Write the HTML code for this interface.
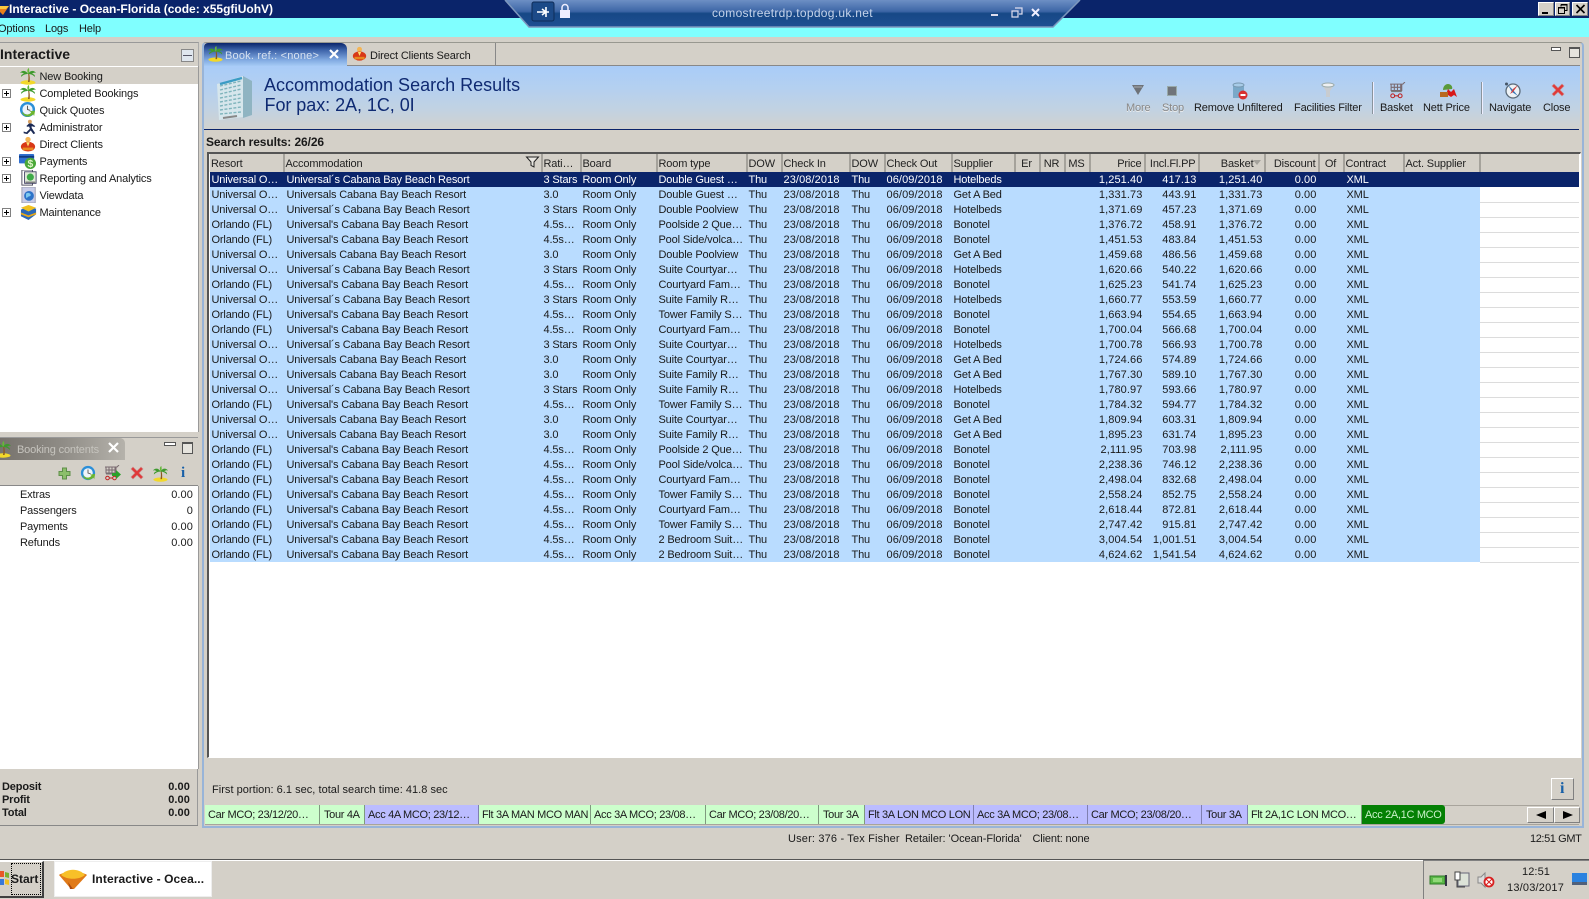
<!DOCTYPE html>
<html><head><meta charset="utf-8"><title>Interactive</title>
<style>
html,body{margin:0;padding:0;width:1589px;height:899px;overflow:hidden;background:#d4d0c8}
body{position:relative;font:11px/14px "Liberation Sans",sans-serif;color:#1a1a1a;letter-spacing:-.15px}
.a{position:absolute;white-space:nowrap}
svg{position:absolute;overflow:visible}
.t{position:absolute;white-space:nowrap;height:14px;line-height:14px}
.b{font-weight:bold}
.exp{position:absolute;left:2px;width:7px;height:7px;border:1px solid #808080;background:#fff}
.exp:before{content:"";position:absolute;left:1px;top:3px;width:5px;height:1px;background:#000}
.exp:after{content:"";position:absolute;left:3px;top:1px;width:1px;height:5px;background:#000}
table{border-collapse:collapse;table-layout:fixed;width:1369px;position:absolute;left:209px;top:154px}
th{height:18px;padding:1px 2px 0 1px;box-sizing:border-box;background:#d4d0c8;font-weight:normal;text-align:left;white-space:nowrap;overflow:hidden;border-right:2px solid #a5a29b;border-left:1px solid #efeee9;color:#222}
tr.h th:last-child{border-right:0}
td{height:15px;padding:1px 2px 0 2px;box-sizing:border-box;white-space:nowrap;overflow:hidden;background:#b9dcff;line-height:14px}
td:nth-child(7),td:nth-child(9),td:nth-child(14),td:nth-child(15),td:nth-child(16),td:nth-child(17){letter-spacing:.1px}
td:nth-child(n+14):nth-child(-n+17){text-align:right;padding-right:2px}
td:nth-child(14){padding-right:4px}
td:nth-child(16){padding-right:3px}
td:nth-child(15){padding-right:1px}
td:nth-child(2),td:nth-child(19){padding-left:3px}
td:last-child{background:#fff;border-bottom:1px solid #dcdcdc}
tr.s td{background:#0a246a;color:#fff;border-bottom:0}
.tg{position:absolute;top:805px;height:19px;line-height:20px;padding-left:4px;box-sizing:border-box;border-right:1px solid #7f9a7f;white-space:nowrap;overflow:hidden;background:#ccffcc;letter-spacing:-.32px}
.bl{background:#bbbcff;border-right-color:#8080b0}
.btn{position:absolute;background:#d4d0c8;border:1px solid;border-color:#fff #808080 #808080 #fff;box-sizing:border-box}
</style></head><body>
<svg width="0" height="0" style="position:absolute">
<defs>
<symbol id="palm" viewBox="0 0 18 18"><ellipse cx="9" cy="15.5" rx="7.5" ry="2.2" fill="#f2d82a"/><path d="M9 6c.6 3 .6 6 0 9h1.6c.4-3 .2-6-.6-9z" fill="#8a5a20"/><path d="M9 7C7 3 3 3 1 6c2-1 3 0 4 1-2 0-3 1-3 3 2-2 4-3 7-3zM9 7c2-4 6-4 8-1-2-1-3 0-4 1 2 0 3 1 3 3-2-2-4-3-7-3z" fill="#3e9a2e"/><path d="M9 7C8 4 8 2 10 1c0 2 1 4-1 6z" fill="#66b83a"/></symbol>
<symbol id="clock" viewBox="0 0 18 18"><circle cx="9" cy="9" r="8" fill="#2c8fd8"/><circle cx="9" cy="9" r="5.4" fill="#eef4fa"/><path d="M9 5v4l3 1" stroke="#555" fill="none"/><path d="M3 12c2 5 8 6 12 2l1 2 1-6-6 1 2 1c-2 3-7 3-9 0z" fill="#6cb52e"/></symbol>
<symbol id="man" viewBox="0 0 18 18"><circle cx="10" cy="3" r="2.2" fill="#d8a060"/><path d="M9 5l-3 3 2 1 1-1 1 3-4 4-3-1 0 2 4 1 4-4 3 4 2-1-4-6V8l3 1 1-1-4-3z" fill="#1b2a55"/></symbol>
<symbol id="client" viewBox="0 0 18 18"><circle cx="9" cy="4" r="3" fill="#f4b454"/><ellipse cx="9" cy="12" rx="8" ry="5.500" fill="#d83818"/><path d="M3 13h12v3H3z" fill="#e88a20"/><path d="M7 7l2 5 2-5z" fill="#ffe070"/></symbol>
<symbol id="pay" viewBox="0 0 18 18"><rect x="0" y="1" width="16" height="10" rx="1" fill="#2f6fd0"/><rect x="0" y="3" width="16" height="2" fill="#113a80"/><circle cx="12" cy="11" r="6" fill="#4aa838"/><text x="12" y="15" font-size="11" font-weight="bold" text-anchor="middle" fill="#dff5c8" font-family="Liberation Sans">$</text></symbol>
<symbol id="rep" viewBox="0 0 18 18"><rect x="1" y="0" width="12" height="17" fill="#fff" stroke="#445"/><rect x="4" y="2" width="13" height="13" fill="#dfe8d8" stroke="#446"/><circle cx="10.500" cy="8" r="4" fill="#3eaa48"/><rect x="5" y="13" width="11" height="1.500" fill="#777"/></symbol>
<symbol id="view" viewBox="0 0 18 18"><rect x="1" y="0" width="15" height="18" fill="#c8cce8" stroke="#99a"/><circle cx="9" cy="10" r="5.500" fill="#2c72c8"/><path d="M6 7c2-1 5 0 5 2s-3 1-4 3-2-3-1-5z" fill="#7bc8f0"/></symbol>
<symbol id="maint" viewBox="0 0 18 18"><path d="M1 6l8-4 8 3v6l-8 6-8-4z" fill="#2a68b8"/><path d="M1 4l8-3 8 3-8 4z" fill="#f0c020"/><path d="M1 9l8 3 8-3v2l-8 3-8-3z" fill="#e8a818"/></symbol>
<symbol id="xred" viewBox="0 0 14 14"><path d="M1 3l2-2 4 4 4-4 2 2-4 4 4 4-2 2-4-4-4 4-2-2 4-4z" fill="#e03838" stroke="#c88" stroke-width=".6"/></symbol>
<symbol id="cart" viewBox="0 0 16 16"><path d="M1 2h12l2-2M2 2v6h10V2M5 2v6M8 2v6M11 2v6M2 5h10" stroke="#7a6a70" fill="none"/><path d="M2 9h10" stroke="#777"/><circle cx="3.500" cy="13" r="1.800" fill="none" stroke="#c02020"/><circle cx="10.500" cy="13" r="1.800" fill="none" stroke="#c02020"/><path d="M5 13h4" stroke="#c02020"/></symbol>
</defs></svg>

<!-- title bar -->
<div class="a" style="left:0;top:0;width:1589px;height:18px;background:#0a246a"></div>
<svg style="left:0;top:2px" width="9" height="14"><path d="M0 4h9L3 13 0 10z" fill="#e8801c"/><path d="M0 4h9L6 7H0z" fill="#f8c840"/></svg>
<div class="t b" style="left:9px;top:2px;color:#fff;font-size:12px;letter-spacing:0">Interactive - Ocean-Florida (code: x55gfiUohV)</div>
<div class="btn" style="left:1538px;top:2px;width:16px;height:14px"><div style="position:absolute;left:3px;top:9px;width:6px;height:2px;background:#000"></div></div>
<div class="btn" style="left:1555px;top:2px;width:15px;height:14px"><svg style="left:2px;top:1px" width="10" height="10"><path d="M3 .5h6v6H7M3 .5v2M.5 3.500h6v6h-6z" fill="none" stroke="#000"/><path d="M3 1h6M1 4h5" stroke="#000"/></svg></div>
<div class="btn" style="left:1572px;top:2px;width:16px;height:14px"><svg style="left:3px;top:2px" width="9" height="8"><path d="M.5 0l8 8M8.500 0l-8 8" stroke="#000" stroke-width="1.600"/></svg></div>

<!-- menu bar -->
<div class="a" style="left:0;top:18px;width:1589px;height:19px;background:#80ffff"></div>
<div class="t" style="left:-2px;top:22px">Options</div>
<div class="t" style="left:45px;top:22px">Logs</div>
<div class="t" style="left:79px;top:22px">Help</div>

<!-- RDP bar -->
<svg style="left:505px;top:0" width="575" height="29"><defs><linearGradient id="rd" x1="0" y1="0" x2="0" y2="1"><stop offset="0" stop-color="#6d8fc4"/><stop offset=".42" stop-color="#3d66a6"/><stop offset=".5" stop-color="#164886"/><stop offset="1" stop-color="#1f4f92"/></linearGradient></defs><path d="M0 0H575L548 27H24z" fill="url(#rd)"/><path d="M0 0L24 27H548L575 0" fill="none" stroke="#7d97bd" stroke-width="1.500"/><rect x="27" y="2" width="22" height="19" rx="2" fill="#1c4a88" stroke="#0e2c58"/><path d="M32 12h12M41 7v10M41 12l-4-3M41 12l-4 3" stroke="#fff" stroke-width="1.600" fill="none"/><rect x="55" y="10" width="10" height="8" fill="#eef"/><path d="M57 10V7.500a3 3 0 0 1 6 0V10" fill="none" stroke="#eef" stroke-width="1.500"/><rect x="486" y="14" width="7" height="2" fill="#dde"/><path d="M510 8h7v6h-3M507 11h6v6h-6z" fill="none" stroke="#dde" stroke-width="1.200"/><path d="M527 9l7 7M534 9l-7 7" stroke="#eef" stroke-width="2"/></svg>
<div class="t" style="left:712px;top:6px;color:#c4d3ea;font-size:12px;letter-spacing:.3px">comostreetrdp.topdog.uk.net</div>

<!-- left panel -->
<div class="a" style="left:0;top:42px;width:198px;height:23px;border-top:1px solid #999;border-bottom:1px solid #888;border-right:1px solid #aaa;box-sizing:content-box"></div>
<div class="t b" style="left:0;top:47px;font-size:14px;letter-spacing:0">Interactive</div>
<div class="a" style="left:181px;top:49px;width:11px;height:11px;border:1px solid #888;background:#dfe6ee"><div style="position:absolute;left:1px;top:5px;width:9px;height:1px;background:#556"></div></div>
<div class="a" style="left:0;top:66px;width:198px;height:366px;background:#fff;border-right:1px solid #999"></div>
<div class="a" style="left:0;top:67px;width:198px;height:17px;background:#d4d0c8"></div>
<svg style="left:19px;top:67px" width="18" height="18"><use href="#palm"/></svg><div class="t" style="left:39.500px;top:70px">New Booking</div>
<div class="exp" style="top:89px"></div><svg style="left:19px;top:84px" width="18" height="18"><use href="#palm"/></svg><div class="t" style="left:39.500px;top:87px">Completed Bookings</div>
<svg style="left:19px;top:101px" width="17" height="17"><use href="#clock"/></svg><div class="t" style="left:39.500px;top:104px">Quick Quotes</div>
<div class="exp" style="top:123px"></div><svg style="left:21px;top:119px" width="16" height="16"><use href="#man"/></svg><div class="t" style="left:39.500px;top:121px">Administrator</div>
<svg style="left:20px;top:136px" width="16" height="16"><use href="#client"/></svg><div class="t" style="left:39.500px;top:138px">Direct Clients</div>
<div class="exp" style="top:157px"></div><svg style="left:19px;top:153px" width="17" height="17"><use href="#pay"/></svg><div class="t" style="left:39.500px;top:155px">Payments</div>
<div class="exp" style="top:174px"></div><svg style="left:21px;top:170px" width="16" height="16"><use href="#rep"/></svg><div class="t" style="left:39.500px;top:172px">Reporting and Analytics</div>
<svg style="left:21px;top:187px" width="16" height="16"><use href="#view"/></svg><div class="t" style="left:39.500px;top:189px">Viewdata</div>
<div class="exp" style="top:208px"></div><svg style="left:20px;top:204px" width="17" height="17"><use href="#maint"/></svg><div class="t" style="left:39.500px;top:206px">Maintenance</div>

<!-- Booking contents panel -->
<div class="a" style="left:0;top:437px;width:198px;height:22px;border-top:1px solid #999"></div>
<div class="a" style="left:0;top:438px;width:125px;height:22px;background:linear-gradient(90deg,#77736d 0%,#8f8c86 50%,#b5b2ab 100%);border-radius:0 5px 0 0"></div>
<svg style="left:-6px;top:440px" width="18" height="18"><use href="#palm"/></svg>
<div class="t" style="left:17px;top:443px;color:#c6c4be">Booking contents</div>
<svg style="left:108px;top:442px" width="11" height="11"><path d="M1 1l9 9M10 1l-9 9" stroke="#fff" stroke-width="2.200"/></svg>
<div class="a" style="left:164px;top:442px;width:10px;height:2px;border:1px solid #555;background:#fff"></div>
<div class="a" style="left:182px;top:442px;width:9px;height:9px;border:1px solid #555;border-top-width:2px;background:#e6e4de"></div>
<div class="a" style="left:0;top:460px;width:198px;height:25px;border-bottom:1px solid #888"></div>
<svg style="left:58px;top:467px" width="13" height="13"><path d="M4.500 1h4v3.500H12v4H8.500V12h-4V8.500H1v-4h3.500z" fill="#8cbf6a" stroke="#5f8f4a"/></svg>
<svg style="left:80px;top:465px" width="16" height="16"><use href="#clock"/></svg>
<svg style="left:104px;top:465px" width="16" height="16"><use href="#cart"/></svg><svg style="left:112px;top:470px" width="9" height="9"><path d="M0 3h4V0l5 4.500L4 9V6H0z" fill="#2ca02c"/></svg>
<svg style="left:130px;top:466px" width="14" height="14"><use href="#xred"/></svg>
<svg style="left:152px;top:465px" width="17" height="17"><use href="#palm"/></svg>
<div class="t b" style="left:181px;top:466px;font-size:15px;font-family:'Liberation Serif',serif;color:#1860a8">i</div>
<div class="a" style="left:0;top:486px;width:198px;height:283px;background:#fff;border-right:1px solid #999"></div>
<div class="t" style="left:20px;top:488px">Extras</div><div class="t" style="right:1396px;top:488px;letter-spacing:.1px">0.00</div>
<div class="t" style="left:20px;top:504px">Passengers</div><div class="t" style="right:1396px;top:504px;letter-spacing:.1px">0</div>
<div class="t" style="left:20px;top:520px">Payments</div><div class="t" style="right:1396px;top:520px;letter-spacing:.1px">0.00</div>
<div class="t" style="left:20px;top:536px">Refunds</div><div class="t" style="right:1396px;top:536px;letter-spacing:.1px">0.00</div>
<div class="t b" style="left:2px;top:780px">Deposit</div><div class="t b" style="right:1399px;top:780px;letter-spacing:.1px">0.00</div>
<div class="t b" style="left:2px;top:793px">Profit</div><div class="t b" style="right:1399px;top:793px;letter-spacing:.1px">0.00</div>
<div class="t b" style="left:2px;top:806px">Total</div><div class="t b" style="right:1399px;top:806px;letter-spacing:.1px">0.00</div>
<div class="a" style="left:0;top:825px;width:198px;height:1px;background:#888"></div>
<div class="a" style="left:197px;top:769px;width:1px;height:56px;background:#999"></div>

<!-- main panel -->
<div class="a" style="left:202px;top:42px;width:1378px;height:783px;border:1px solid #989890;border-radius:4px 4px 0 0;border-left:2px solid #98b4d8;border-bottom:2px solid #98b4d8;border-right:2px solid #98b4d8"></div>
<div class="a" style="left:204px;top:65px;width:1376px;height:1px;background:#888"></div>
<div class="a" style="left:204px;top:43px;width:143px;height:23px;background:linear-gradient(180deg,#0a246a 0,#3c62a8 30%,#82abe2 75%,#a6caf5 100%);border-radius:4px 6px 0 0"></div>
<svg style="left:207px;top:45px" width="17" height="17"><use href="#palm"/></svg>
<div class="t" style="left:225px;top:48.500px;color:#d6e1f0;letter-spacing:.2px">Book. ref.: &lt;none&gt;</div>
<svg style="left:329px;top:49px" width="10" height="10"><path d="M1 1l8 8M9 1l-8 8" stroke="#fff" stroke-width="2.200"/></svg>
<div class="a" style="left:347px;top:43px;width:148px;height:22px;border-right:1px solid #888"></div>
<svg style="left:352px;top:46px" width="15" height="15"><use href="#client"/></svg>
<div class="t" style="left:370px;top:48.500px;letter-spacing:-.13px">Direct Clients Search</div>
<div class="a" style="left:1551px;top:47px;width:8px;height:2px;border:1px solid #555;background:#fff"></div>
<div class="a" style="left:1569px;top:47px;width:9px;height:8px;border:1px solid #555;border-top-width:2px;background:#e6e4de"></div>

<!-- header band -->
<div class="a" style="left:204px;top:66px;width:1376px;height:63px;background:linear-gradient(180deg,#a9ccf8 0,#b4d0f0 35%,#c2d2e2 70%,#d1d2ce 100%)"></div>
<div class="a" style="left:204px;top:129px;width:1375px;height:1px;background:#0a246a"></div>
<svg style="left:217px;top:73px" width="37" height="48"><path d="M0 11L26 3v41L2 47z" fill="#d6e6ec"/><path d="M26 3l9 5v34l-9 3z" fill="#8fb4c2"/><g stroke="#7fb4bc" stroke-width="1.400" stroke-dasharray="3 1.500" fill="none"><path d="M3 13l21-5M3 17l21-5M3 21l21-5M3 25l21-4M3 29l21-4M3 33l21-4M3 37l21-3M3 41l21-2"/></g><path d="M3 11l22-6" stroke="#3a9cc4" stroke-width="2.400"/><path d="M6 45l14-2" stroke="#888" stroke-width="2"/></svg>
<div class="t" style="left:264px;top:76px;font-size:18px;line-height:18px;height:18px;color:#0f2a72;letter-spacing:0">Accommodation Search Results</div>
<div class="t" style="left:264.500px;top:96px;font-size:18px;line-height:18px;height:18px;color:#0f2a72;letter-spacing:-.05px">For pax: 2A, 1C, 0I</div>

<!-- toolbar -->
<svg style="left:1132px;top:84px" width="13" height="12"><path d="M0 1h12L6 11z" fill="#6e7278"/><path d="M2 3h8" stroke="#a8acb0"/></svg>
<div class="a" style="left:1167px;top:86px;width:8px;height:8px;background:#70747a;border:1px solid #9aa"></div>
<svg style="left:1232px;top:82px" width="16" height="18"><path d="M1 3h11v13H1z" fill="#7aa8c8"/><ellipse cx="6.500" cy="3" rx="5.500" ry="2" fill="#a8cce8" stroke="#7898b0"/><circle cx="11" cy="13" r="4.500" fill="#d83030"/><rect x="8.500" y="12" width="5" height="2" fill="#fff"/></svg>
<svg style="left:1321px;top:82px" width="14" height="16"><path d="M0 2h14L9 9v6H5V9z" fill="#c8ccd0"/><ellipse cx="7" cy="3" rx="6" ry="2" fill="#eef0f2" stroke="#9aa"/></svg>
<svg style="left:1389px;top:82px" width="17" height="17"><use href="#cart"/></svg>
<svg style="left:1440px;top:82px" width="17" height="17"><path d="M3 8c0-3 2-6 5-6s5 3 4 5z" fill="#5a9a3a"/><path d="M5 15l3-8 3 3 3-3 3 8-3-2-3 2-3-2z" fill="#d81818"/><rect x="0" y="10" width="8" height="5" fill="#b86820"/></svg>
<svg style="left:1504px;top:82px" width="18" height="18"><circle cx="9" cy="9" r="7" fill="#eef3f6" stroke="#5a6a78" stroke-width="1.300"/><path d="M4 3l5 5 5 6-6-4z" fill="#3878b8"/><path d="M14 3L9 10l-3 2 3-5z" fill="#d04040"/><circle cx="2.500" cy="2" r="1.500" fill="#456"/></svg>
<svg style="left:1551px;top:83px" width="14" height="14"><use href="#xred"/></svg>
<div class="t" style="left:1126px;top:100.500px;color:#888;text-shadow:0 1px 0 #eee">More</div>
<div class="t" style="left:1162px;top:100.500px;color:#888;text-shadow:0 1px 0 #eee">Stop</div>
<div class="t" style="left:1194px;top:100.500px">Remove Unfiltered</div>
<div class="t" style="left:1294px;top:100.500px">Facilities Filter</div>
<div class="a" style="left:1372px;top:82px;width:1px;height:32px;background:#8a949c;border-right:1px solid #eef"></div>
<div class="t" style="left:1380px;top:100.500px">Basket</div>
<div class="t" style="left:1423px;top:100.500px">Nett Price</div>
<div class="a" style="left:1481px;top:82px;width:1px;height:32px;background:#8a949c;border-right:1px solid #eef"></div>
<div class="t" style="left:1489px;top:100.500px">Navigate</div>
<div class="t" style="left:1543px;top:100.500px">Close</div>

<div class="t b" style="left:206px;top:135px;font-size:12px;letter-spacing:-.1px">Search results: 26/26</div>

<!-- table frame -->
<div class="a" style="left:207px;top:152px;width:1371px;height:603px;background:#fff;border:1px solid;border-color:#555 #fff #fff #555;border-top-width:2px;border-left-width:2px;box-sizing:content-box"></div>
<table>
<colgroup><col style="width:74px"><col style="width:258px"><col style="width:39px"><col style="width:76px"><col style="width:90px"><col style="width:35px"><col style="width:68px"><col style="width:35px"><col style="width:67px"><col style="width:63px"><col style="width:25px"><col style="width:25px"><col style="width:25px"><col style="width:55px"><col style="width:54px"><col style="width:66px"><col style="width:54px"><col style="width:25px"><col style="width:60px"><col style="width:76px"><col style="width:99px"></colgroup>
<tr class="h"><th>Resort</th><th>Accommodation</th><th>Rati…</th><th>Board</th><th>Room type</th><th>DOW</th><th>Check In</th><th>DOW</th><th>Check Out</th><th>Supplier</th><th style="text-align:center">Er</th><th style="text-align:center">NR</th><th style="text-align:center">MS</th><th style="text-align:right">Price</th><th style="text-align:right">Incl.Fl.PP</th><th style="text-align:right;padding-right:10px">Basket</th><th style="text-align:right">Discount</th><th style="text-align:center">Of</th><th>Contract</th><th>Act. Supplier</th><th></th></tr>
<tr class="s"><td>Universal O…</td><td>Universal´s Cabana Bay Beach Resort</td><td>3 Stars</td><td>Room Only</td><td>Double Guest …</td><td>Thu</td><td>23/08/2018</td><td>Thu</td><td>06/09/2018</td><td>Hotelbeds</td><td></td><td></td><td></td><td>1,251.40</td><td>417.13</td><td>1,251.40</td><td>0.00</td><td></td><td>XML</td><td></td><td></td></tr>
<tr><td>Universal O…</td><td>Universals Cabana Bay Beach Resort</td><td>3.0</td><td>Room Only</td><td>Double Guest …</td><td>Thu</td><td>23/08/2018</td><td>Thu</td><td>06/09/2018</td><td>Get A Bed</td><td></td><td></td><td></td><td>1,331.73</td><td>443.91</td><td>1,331.73</td><td>0.00</td><td></td><td>XML</td><td></td><td></td></tr>
<tr><td>Universal O…</td><td>Universal´s Cabana Bay Beach Resort</td><td>3 Stars</td><td>Room Only</td><td>Double Poolview</td><td>Thu</td><td>23/08/2018</td><td>Thu</td><td>06/09/2018</td><td>Hotelbeds</td><td></td><td></td><td></td><td>1,371.69</td><td>457.23</td><td>1,371.69</td><td>0.00</td><td></td><td>XML</td><td></td><td></td></tr>
<tr><td>Orlando (FL)</td><td>Universal's Cabana Bay Beach Resort</td><td>4.5s…</td><td>Room Only</td><td>Poolside 2 Que…</td><td>Thu</td><td>23/08/2018</td><td>Thu</td><td>06/09/2018</td><td>Bonotel</td><td></td><td></td><td></td><td>1,376.72</td><td>458.91</td><td>1,376.72</td><td>0.00</td><td></td><td>XML</td><td></td><td></td></tr>
<tr><td>Orlando (FL)</td><td>Universal's Cabana Bay Beach Resort</td><td>4.5s…</td><td>Room Only</td><td>Pool Side/volca…</td><td>Thu</td><td>23/08/2018</td><td>Thu</td><td>06/09/2018</td><td>Bonotel</td><td></td><td></td><td></td><td>1,451.53</td><td>483.84</td><td>1,451.53</td><td>0.00</td><td></td><td>XML</td><td></td><td></td></tr>
<tr><td>Universal O…</td><td>Universals Cabana Bay Beach Resort</td><td>3.0</td><td>Room Only</td><td>Double Poolview</td><td>Thu</td><td>23/08/2018</td><td>Thu</td><td>06/09/2018</td><td>Get A Bed</td><td></td><td></td><td></td><td>1,459.68</td><td>486.56</td><td>1,459.68</td><td>0.00</td><td></td><td>XML</td><td></td><td></td></tr>
<tr><td>Universal O…</td><td>Universal´s Cabana Bay Beach Resort</td><td>3 Stars</td><td>Room Only</td><td>Suite Courtyar…</td><td>Thu</td><td>23/08/2018</td><td>Thu</td><td>06/09/2018</td><td>Hotelbeds</td><td></td><td></td><td></td><td>1,620.66</td><td>540.22</td><td>1,620.66</td><td>0.00</td><td></td><td>XML</td><td></td><td></td></tr>
<tr><td>Orlando (FL)</td><td>Universal's Cabana Bay Beach Resort</td><td>4.5s…</td><td>Room Only</td><td>Courtyard Fam…</td><td>Thu</td><td>23/08/2018</td><td>Thu</td><td>06/09/2018</td><td>Bonotel</td><td></td><td></td><td></td><td>1,625.23</td><td>541.74</td><td>1,625.23</td><td>0.00</td><td></td><td>XML</td><td></td><td></td></tr>
<tr><td>Universal O…</td><td>Universal´s Cabana Bay Beach Resort</td><td>3 Stars</td><td>Room Only</td><td>Suite Family R…</td><td>Thu</td><td>23/08/2018</td><td>Thu</td><td>06/09/2018</td><td>Hotelbeds</td><td></td><td></td><td></td><td>1,660.77</td><td>553.59</td><td>1,660.77</td><td>0.00</td><td></td><td>XML</td><td></td><td></td></tr>
<tr><td>Orlando (FL)</td><td>Universal's Cabana Bay Beach Resort</td><td>4.5s…</td><td>Room Only</td><td>Tower Family S…</td><td>Thu</td><td>23/08/2018</td><td>Thu</td><td>06/09/2018</td><td>Bonotel</td><td></td><td></td><td></td><td>1,663.94</td><td>554.65</td><td>1,663.94</td><td>0.00</td><td></td><td>XML</td><td></td><td></td></tr>
<tr><td>Orlando (FL)</td><td>Universal's Cabana Bay Beach Resort</td><td>4.5s…</td><td>Room Only</td><td>Courtyard Fam…</td><td>Thu</td><td>23/08/2018</td><td>Thu</td><td>06/09/2018</td><td>Bonotel</td><td></td><td></td><td></td><td>1,700.04</td><td>566.68</td><td>1,700.04</td><td>0.00</td><td></td><td>XML</td><td></td><td></td></tr>
<tr><td>Universal O…</td><td>Universal´s Cabana Bay Beach Resort</td><td>3 Stars</td><td>Room Only</td><td>Suite Courtyar…</td><td>Thu</td><td>23/08/2018</td><td>Thu</td><td>06/09/2018</td><td>Hotelbeds</td><td></td><td></td><td></td><td>1,700.78</td><td>566.93</td><td>1,700.78</td><td>0.00</td><td></td><td>XML</td><td></td><td></td></tr>
<tr><td>Universal O…</td><td>Universals Cabana Bay Beach Resort</td><td>3.0</td><td>Room Only</td><td>Suite Courtyar…</td><td>Thu</td><td>23/08/2018</td><td>Thu</td><td>06/09/2018</td><td>Get A Bed</td><td></td><td></td><td></td><td>1,724.66</td><td>574.89</td><td>1,724.66</td><td>0.00</td><td></td><td>XML</td><td></td><td></td></tr>
<tr><td>Universal O…</td><td>Universals Cabana Bay Beach Resort</td><td>3.0</td><td>Room Only</td><td>Suite Family R…</td><td>Thu</td><td>23/08/2018</td><td>Thu</td><td>06/09/2018</td><td>Get A Bed</td><td></td><td></td><td></td><td>1,767.30</td><td>589.10</td><td>1,767.30</td><td>0.00</td><td></td><td>XML</td><td></td><td></td></tr>
<tr><td>Universal O…</td><td>Universal´s Cabana Bay Beach Resort</td><td>3 Stars</td><td>Room Only</td><td>Suite Family R…</td><td>Thu</td><td>23/08/2018</td><td>Thu</td><td>06/09/2018</td><td>Hotelbeds</td><td></td><td></td><td></td><td>1,780.97</td><td>593.66</td><td>1,780.97</td><td>0.00</td><td></td><td>XML</td><td></td><td></td></tr>
<tr><td>Orlando (FL)</td><td>Universal's Cabana Bay Beach Resort</td><td>4.5s…</td><td>Room Only</td><td>Tower Family S…</td><td>Thu</td><td>23/08/2018</td><td>Thu</td><td>06/09/2018</td><td>Bonotel</td><td></td><td></td><td></td><td>1,784.32</td><td>594.77</td><td>1,784.32</td><td>0.00</td><td></td><td>XML</td><td></td><td></td></tr>
<tr><td>Universal O…</td><td>Universals Cabana Bay Beach Resort</td><td>3.0</td><td>Room Only</td><td>Suite Courtyar…</td><td>Thu</td><td>23/08/2018</td><td>Thu</td><td>06/09/2018</td><td>Get A Bed</td><td></td><td></td><td></td><td>1,809.94</td><td>603.31</td><td>1,809.94</td><td>0.00</td><td></td><td>XML</td><td></td><td></td></tr>
<tr><td>Universal O…</td><td>Universals Cabana Bay Beach Resort</td><td>3.0</td><td>Room Only</td><td>Suite Family R…</td><td>Thu</td><td>23/08/2018</td><td>Thu</td><td>06/09/2018</td><td>Get A Bed</td><td></td><td></td><td></td><td>1,895.23</td><td>631.74</td><td>1,895.23</td><td>0.00</td><td></td><td>XML</td><td></td><td></td></tr>
<tr><td>Orlando (FL)</td><td>Universal's Cabana Bay Beach Resort</td><td>4.5s…</td><td>Room Only</td><td>Poolside 2 Que…</td><td>Thu</td><td>23/08/2018</td><td>Thu</td><td>06/09/2018</td><td>Bonotel</td><td></td><td></td><td></td><td>2,111.95</td><td>703.98</td><td>2,111.95</td><td>0.00</td><td></td><td>XML</td><td></td><td></td></tr>
<tr><td>Orlando (FL)</td><td>Universal's Cabana Bay Beach Resort</td><td>4.5s…</td><td>Room Only</td><td>Pool Side/volca…</td><td>Thu</td><td>23/08/2018</td><td>Thu</td><td>06/09/2018</td><td>Bonotel</td><td></td><td></td><td></td><td>2,238.36</td><td>746.12</td><td>2,238.36</td><td>0.00</td><td></td><td>XML</td><td></td><td></td></tr>
<tr><td>Orlando (FL)</td><td>Universal's Cabana Bay Beach Resort</td><td>4.5s…</td><td>Room Only</td><td>Courtyard Fam…</td><td>Thu</td><td>23/08/2018</td><td>Thu</td><td>06/09/2018</td><td>Bonotel</td><td></td><td></td><td></td><td>2,498.04</td><td>832.68</td><td>2,498.04</td><td>0.00</td><td></td><td>XML</td><td></td><td></td></tr>
<tr><td>Orlando (FL)</td><td>Universal's Cabana Bay Beach Resort</td><td>4.5s…</td><td>Room Only</td><td>Tower Family S…</td><td>Thu</td><td>23/08/2018</td><td>Thu</td><td>06/09/2018</td><td>Bonotel</td><td></td><td></td><td></td><td>2,558.24</td><td>852.75</td><td>2,558.24</td><td>0.00</td><td></td><td>XML</td><td></td><td></td></tr>
<tr><td>Orlando (FL)</td><td>Universal's Cabana Bay Beach Resort</td><td>4.5s…</td><td>Room Only</td><td>Courtyard Fam…</td><td>Thu</td><td>23/08/2018</td><td>Thu</td><td>06/09/2018</td><td>Bonotel</td><td></td><td></td><td></td><td>2,618.44</td><td>872.81</td><td>2,618.44</td><td>0.00</td><td></td><td>XML</td><td></td><td></td></tr>
<tr><td>Orlando (FL)</td><td>Universal's Cabana Bay Beach Resort</td><td>4.5s…</td><td>Room Only</td><td>Tower Family S…</td><td>Thu</td><td>23/08/2018</td><td>Thu</td><td>06/09/2018</td><td>Bonotel</td><td></td><td></td><td></td><td>2,747.42</td><td>915.81</td><td>2,747.42</td><td>0.00</td><td></td><td>XML</td><td></td><td></td></tr>
<tr><td>Orlando (FL)</td><td>Universal's Cabana Bay Beach Resort</td><td>4.5s…</td><td>Room Only</td><td>2 Bedroom Suit…</td><td>Thu</td><td>23/08/2018</td><td>Thu</td><td>06/09/2018</td><td>Bonotel</td><td></td><td></td><td></td><td>3,004.54</td><td>1,001.51</td><td>3,004.54</td><td>0.00</td><td></td><td>XML</td><td></td><td></td></tr>
<tr><td>Orlando (FL)</td><td>Universal's Cabana Bay Beach Resort</td><td>4.5s…</td><td>Room Only</td><td>2 Bedroom Suit…</td><td>Thu</td><td>23/08/2018</td><td>Thu</td><td>06/09/2018</td><td>Bonotel</td><td></td><td></td><td></td><td>4,624.62</td><td>1,541.54</td><td>4,624.62</td><td>0.00</td><td></td><td>XML</td><td></td><td></td></tr>
</table>
<svg style="left:526px;top:156px" width="14" height="12"><path d="M.5 1h12L8 6v5L5 9.500V6z" fill="#e8e6e0" stroke="#222"/></svg>
<svg style="left:1253px;top:160px" width="8" height="5"><path d="M0 0h8L4 5z" fill="#a4a29c"/></svg>

<!-- bottom -->
<div class="t" style="left:212px;top:783px;letter-spacing:.03px">First portion: 6.1 sec, total search time: 41.8 sec</div>
<div class="btn" style="left:1551px;top:778px;width:23px;height:22px"><div class="t b" style="left:8px;top:3px;font-size:16px;font-family:'Liberation Serif',serif;color:#1860a8">i</div></div>
<div class="a" style="left:205px;top:805px;width:1374px;height:1px;background:#a8a49c"></div>
<div class="tg" style="left:205px;width:115px;padding-left:3px">Car MCO; 23/12/20…</div>
<div class="tg" style="left:320px;width:45px">Tour 4A</div>
<div class="tg bl" style="left:365px;width:114px;padding-left:3px">Acc 4A MCO; 23/12…</div>
<div class="tg" style="left:479px;width:112px;padding-left:3px">Flt 3A MAN MCO MAN</div>
<div class="tg" style="left:591px;width:115px;padding-left:3px">Acc 3A MCO; 23/08…</div>
<div class="tg" style="left:706px;width:113px;padding-left:3px">Car MCO; 23/08/20…</div>
<div class="tg" style="left:819px;width:46px">Tour 3A</div>
<div class="tg bl" style="left:865px;width:109px;padding-left:3px">Flt 3A LON MCO LON</div>
<div class="tg bl" style="left:974px;width:114px;padding-left:3px">Acc 3A MCO; 23/08…</div>
<div class="tg bl" style="left:1088px;width:114px;padding-left:3px">Car MCO; 23/08/20…</div>
<div class="tg bl" style="left:1202px;width:46px">Tour 3A</div>
<div class="tg" style="left:1248px;width:114px;padding-left:3px">Flt 2A,1C LON MCO…</div>
<div class="tg" style="left:1362px;width:83px;background:#048004;color:#c8f0c8;border:0;border-radius:0 3px 3px 0;padding-left:3px">Acc 2A,1C MCO</div>
<div class="a" style="left:205px;top:824px;width:1374px;height:1px;background:#a8a49c"></div>
<div class="btn" style="left:1527px;top:807px;width:27px;height:16px"><svg style="left:8px;top:3px" width="10" height="8"><path d="M0 4L10 0v8z" fill="#000"/></svg></div>
<div class="btn" style="left:1554px;top:807px;width:26px;height:16px"><svg style="left:8px;top:3px" width="10" height="8"><path d="M10 4L0 0v8z" fill="#000"/></svg></div>

<!-- status -->
<div class="t" style="left:788px;top:832px;letter-spacing:.17px">User: 376 - Tex Fisher</div>
<div class="t" style="left:905px;top:832px;letter-spacing:-.05px">Retailer: 'Ocean-Florida'</div>
<div class="t" style="left:1032.500px;top:832px">Client: none</div>
<div class="t" style="left:1530px;top:832px;letter-spacing:-.4px">12:51 GMT</div>

<!-- taskbar -->
<div class="a" style="left:0;top:859px;width:1589px;height:1px;background:#555"></div>
<div class="a" style="left:0;top:860px;width:1589px;height:1px;background:#fff"></div>
<div class="a" style="left:0;top:861px;width:44px;height:37px;background:#d4d0c8;border-right:2px solid #404040;border-bottom:2px solid #404040;border-top:1px solid #fff;box-sizing:border-box"></div>
<div class="a" style="left:11px;top:863px;width:30px;height:32px;border:1px dotted #000;box-sizing:border-box"></div>
<svg style="left:0;top:871px" width="9" height="15"><path d="M0 0h4v6H0z" fill="#e85828"/><path d="M5 1l4 1v5l-4-1z" fill="#7ab030"/><path d="M0 8h4v6H0z" fill="#3878d8"/><path d="M5 8l4 1v5l-4-1z" fill="#f0c020"/></svg>
<div class="t b" style="left:11px;top:872px;font-size:12px;letter-spacing:0">Start</div>
<div class="a" style="left:54px;top:861px;width:158px;height:36px;background:#fff;border:1px solid #eee;box-sizing:border-box"></div>
<svg style="left:59px;top:868px" width="28" height="21"><path d="M0 7C5 3 23 3 28 7L15 21h-3z" fill="#e07a18"/><path d="M2 7C8 0 20 0 26 7 20 12 8 12 2 7z" fill="#f8c028"/><path d="M9 14l5 7h-3z" fill="#a84810"/></svg>
<div class="t b" style="left:92px;top:872px;font-size:12px;letter-spacing:.1px">Interactive - Ocea...</div>
<div class="a" style="left:1423px;top:860px;width:166px;height:39px;border-left:1px solid #808080;border-top:1px solid #808080;box-sizing:border-box"></div>
<svg style="left:1430px;top:875px" width="17" height="11"><rect x="0" y="1" width="15" height="8" fill="#5cb848" stroke="#2e7a28"/><rect x="3" y="3" width="9" height="4" fill="#90d878"/><rect x="15" y="0" width="2" height="11" fill="#334"/></svg>
<svg style="left:1454px;top:871px" width="16" height="17"><rect x="4" y="2" width="11" height="13" fill="#dde3d8" stroke="#667"/><rect x="1" y="1" width="5" height="8" fill="#fff" stroke="#444"/><path d="M3 9v7h8" stroke="#444" fill="none"/></svg>
<svg style="left:1478px;top:872px" width="16" height="16"><path d="M0 5h3l4-4v14l-4-4H0z" fill="#ddd" stroke="#888"/><circle cx="11" cy="10" r="4.500" fill="#fff" stroke="#d82020" stroke-width="1.800"/><path d="M8 7l6 6M14 7l-6 6" stroke="#d82020"/></svg>
<div class="t" style="left:1522px;top:865px;letter-spacing:.1px">12:51</div>
<div class="t" style="left:1507px;top:881px;letter-spacing:.2px">13/03/2017</div>
<svg style="left:1572px;top:873px" width="15" height="12"><rect x="0" y="0" width="15" height="10" fill="#2a82e0"/><rect x="0" y="9" width="15" height="3" fill="#50607a"/></svg>
</body></html>
